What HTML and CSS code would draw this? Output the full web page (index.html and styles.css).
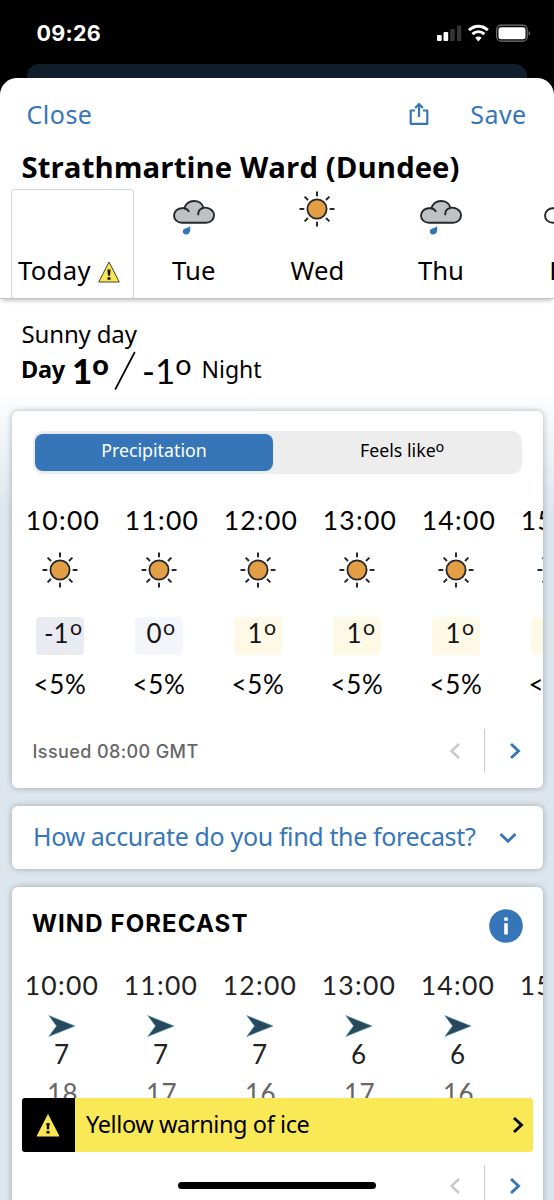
FILE: index.html
```
<!DOCTYPE html>
<html lang="en">
<head>
<meta charset="utf-8">
<title>Weather forecast</title>
<link rel="stylesheet" href="styles.css">
</head>
<body>
<svg class="defs" aria-hidden="true">
  <symbol id="sun" viewBox="0 0 36 36">
    <circle cx="18" cy="18" r="9.6" fill="#e39f45" stroke="#26272a" stroke-width="1.8"/>
    <path d="M18 .5v4.8M18 30.7v4.8M.5 18h4.8M30.7 18h4.8M5.6 5.6l3.4 3.4M27 27l3.400 3.400M5.600 30.400l3.400-3.400M27 9l3.400-3.400" stroke="#26272a" stroke-width="2" fill="none"/>
  </symbol>
  <symbol id="cloud" viewBox="0 0 42 24">
    <path d="M9 22.8C4.3 22.8 1 19.5 1 15.6 1 11.3 4.7 8 9.6 8.3 10.3 7.8 11 8 11.5 8.3 12.3 4 16.2 1 21 1c4.700 0 8.500 2.800 9.400 6.700C36.200 7 41 10.500 41 15.300c0 4.300-3.500 7.500-8 7.500z" fill="currentColor" stroke="#26272a" stroke-width="1.9"/>
    <path d="M11 8.200c2.300.4 4.200 1.700 5 3.800M31 7.900c-3.700.5-6 3.300-5.800 7.300" fill="none" stroke="#26272a" stroke-width="1.900"/>
  </symbol>
  <symbol id="rain" viewBox="0 0 42 36">
    <use href="#cloud" width="42" height="24"/>
    <path d="M17 26.200c.8 3.700.2 8-3.600 8.300-2.700.1-4.200-2.200-3.300-4.300.9-2.200 4.400-1.500 6.900-4z" fill="#3676b8"/>
  </symbol>
  <symbol id="next" viewBox="0 0 12 18"><path d="M2 2l7.500 7L2 16" fill="none" stroke="currentColor" stroke-width="2.900"/></symbol>
  <symbol id="prev" viewBox="0 0 12 18"><path d="M10 2L2.500 9l7.500 7" fill="none" stroke="currentColor" stroke-width="2.400"/></symbol>
  <symbol id="wind" viewBox="0 0 28 22"><path d="M.8.600L27 11 .8 21.400 8.500 11z" fill="#28495c" stroke="#4b94ad" stroke-width=".6"/></symbol>
  <symbol id="bang" viewBox="0 0 22 22">
    <path d="M11 1L21.300 21H.7z" fill="#fae750" stroke="currentColor" stroke-width="1"/>
    <path d="M9.400 8.500h3.200l-.6 6.300h-2zM9.500 16.200h3v2.500h-3z" fill="#111"/>
  </symbol>
</svg>
<div class="phone">
  <div class="status">
    <span class="clock">09:26</span>
    <svg class="status-icons" width="96" height="20" viewBox="0 0 96 20">
      <rect x="1" y="12" width="4.700" height="6" rx="1" fill="#fff"/>
      <rect x="7.500" y="9" width="4.700" height="9" rx="1" fill="#fff"/>
      <rect x="14.200" y="6" width="4.500" height="12" rx="1" fill="#353535"/>
      <rect x="21" y="2.500" width="4.300" height="15.500" rx="1" fill="#353535"/>
      <path d="M33 7.200c5.500-5.300 13.300-5.300 18.800 0M36.400 11.200c3.700-3.400 8.300-3.400 12 0" fill="none" stroke="#fff" stroke-width="3"/>
      <path d="M42.400 18.500l-3.200-3.700c1.800-1.700 4.600-1.700 6.400 0z" fill="#fff"/>
      <rect x="60.700" y="2.200" width="30.500" height="16" rx="4.500" fill="none" stroke="#777" stroke-width="1.200"/>
      <rect x="62.500" y="4.200" width="27" height="12" rx="2.500" fill="#fff"/>
      <path d="M92.700 8v4.600c1.900-.8 1.900-3.800 0-4.600z" fill="#777"/>
    </svg>
  </div>
  <div class="behind"></div>
  <main class="sheet">
    <header class="toolbar">
      <a class="close">Close</a>
      <svg class="share" width="20" height="24" viewBox="0 0 20 24"><path d="M6 8.500H1.700v13.300h16.600V8.500H14M10 15V2.500M6.200 6L10 2l3.800 4" fill="none" stroke="#3676b8" stroke-width="2.200" stroke-linejoin="round"/></svg>
      <a class="save">Save</a>
    </header>
    <h1>Strathmartine Ward (Dundee)</h1>
    <nav class="tabs">
      <div class="tab active"><span class="today">Today</span><svg class="tab-warn" width="22" height="22"><use href="#bang"/></svg></div>
      <div class="tab"><svg class="wx rain" width="42" height="36"><use href="#rain"/></svg><span class="tue">Tue</span></div>
      <div class="tab"><svg class="wx" width="36" height="36"><use href="#sun"/></svg><span>Wed</span></div>
      <div class="tab"><svg class="wx rain" width="42" height="36"><use href="#rain"/></svg><span>Thu</span></div>
      <div class="tab"><svg class="wx clear" width="42" height="36" viewBox="0 0 42 36"><use href="#cloud" width="42" height="24"/></svg><span>Fri</span></div>
    </nav>
    <section class="body">
      <p class="desc">Sunny day</p>
      <p class="range"><b class="day">Day</b><b class="hi">1<i>o</i></b><svg width="22" height="40" viewBox="0 0 22 40"><path d="M1.200 38.500L20.800 1" stroke="#000" stroke-width="1.700"/></svg><span class="lo">-1<i>o</i></span><span class="night">Night</span></p>

      <section class="card hourly">
        <div class="toggle"><span class="on">Precipitation</span><span class="off">Feels like<i>o</i></span></div>
        <div class="cols">
          <div class="col"><time>10:00</time><svg width="36" height="36"><use href="#sun"/></svg><span class="chip cold"><span>-1<i>o</i></span></span><span class="pct">&lt;5%</span></div>
          <div class="col"><time>11:00</time><svg width="36" height="36"><use href="#sun"/></svg><span class="chip cool"><span>0<i>o</i></span></span><span class="pct">&lt;5%</span></div>
          <div class="col"><time>12:00</time><svg width="36" height="36"><use href="#sun"/></svg><span class="chip"><span>1<i>o</i></span></span><span class="pct">&lt;5%</span></div>
          <div class="col"><time>13:00</time><svg width="36" height="36"><use href="#sun"/></svg><span class="chip"><span>1<i>o</i></span></span><span class="pct">&lt;5%</span></div>
          <div class="col"><time>14:00</time><svg width="36" height="36"><use href="#sun"/></svg><span class="chip"><span>1<i>o</i></span></span><span class="pct">&lt;5%</span></div>
          <div class="col"><time>15:00</time><svg width="36" height="36"><use href="#sun"/></svg><span class="chip"></span><span class="pct">&lt;5%</span></div>
        </div>
        <div class="foot">
          <span class="issued">Issued 08:00 GMT</span>
          <svg class="prev" width="12" height="18"><use href="#prev"/></svg>
          <span class="rule"></span>
          <svg class="next" width="12" height="18"><use href="#next"/></svg>
        </div>
      </section>

      <section class="card ask">
        <span>How accurate do you find the forecast?</span>
        <svg width="18" height="12" viewBox="0 0 18 12"><path d="M1.500 2L9 9.300 16.500 2" fill="none" stroke="#3676b8" stroke-width="2.800"/></svg>
      </section>

      <section class="card wind">
        <div class="wind-head">
          <h2>WIND FORECAST</h2>
          <svg width="34" height="34" viewBox="0 0 34 34"><circle cx="17" cy="17" r="16.800" fill="#3676b8"/><path d="M15.200 8.500h3.600v3.200h-3.600zM15.200 14.300h3.600v11.200h-3.600z" fill="#fff"/></svg>
        </div>
        <div class="cols">
          <div class="col"><time>10:00</time><svg width="28" height="22"><use href="#wind"/></svg><span class="speed">7</span><span class="gust">18</span></div>
          <div class="col"><time>11:00</time><svg width="28" height="22"><use href="#wind"/></svg><span class="speed">7</span><span class="gust">17</span></div>
          <div class="col"><time>12:00</time><svg width="28" height="22"><use href="#wind"/></svg><span class="speed">7</span><span class="gust">16</span></div>
          <div class="col"><time>13:00</time><svg width="28" height="22"><use href="#wind"/></svg><span class="speed">6</span><span class="gust">17</span></div>
          <div class="col"><time>14:00</time><svg width="28" height="22"><use href="#wind"/></svg><span class="speed">6</span><span class="gust">16</span></div>
          <div class="col"><time>15:00</time></div>
        </div>
        <div class="foot">
          <svg class="prev" width="12" height="18"><use href="#prev"/></svg>
          <span class="rule"></span>
          <svg class="next" width="12" height="18"><use href="#next"/></svg>
        </div>
      </section>
    </section>
  </main>
  <div class="warning">
    <span class="warning-icon"><svg width="24" height="23" viewBox="0 0 22 22"><use href="#bang"/></svg></span>
    <span class="warning-text">Yellow warning of ice</span>
    <svg width="12" height="18"><use href="#next"/></svg>
  </div>
  <div class="home"></div>
</div>
</body>
</html>
```
FILE: styles.css
```
* { box-sizing: border-box; }
body, h1, h2, p { margin: 0; }
body { font-family: "Noto Sans", "Open Sans", sans-serif; color: #000; background: #000; }
svg { display: block; flex: none; }
span, time, a, b { white-space: nowrap; }
.defs { position: absolute; width: 0; height: 0; }

.phone { position: relative; width: 554px; height: 1200px; overflow: hidden; background: #000; }
.status { height: 64px; padding: 0 22px 0 36.500px; display: flex; justify-content: space-between; align-items: flex-start; }
.clock { font: 700 21.500px/30px "Inter", sans-serif; color: #fff; margin-top: 18px; letter-spacing: .25px; }
.status-icons { margin-top: 23px; }
.behind { height: 14px; margin: 0 27px; background: #101e2b; border-radius: 12px 12px 0 0; }
.sheet { height: 1122px; background: #fff; border-radius: 17px 17px 0 0; overflow: hidden; }

.toolbar { height: 72px; display: flex; align-items: center; padding: 0 27.500px 0 26.500px; color: #3676b8; font-size: 25px; }
.close { letter-spacing: .5px; flex: 1; }
.save { letter-spacing: .4px; }
.share { margin: 0 41px 0 0; }
h1 { height: 36px; padding-left: 21.500px; font: 700 29.300px/34px "Open Sans", sans-serif; letter-spacing: .07px; white-space: nowrap; }

.tabs { position: relative; z-index: 1; height: 113px; display: flex; padding: 3px 0 0 11px; border-bottom: 1px solid #c4c4c4; box-shadow: 0 4px 4px -2px rgba(0,0,0,.22); }
.tab { flex: none; width: 123.600px; height: 109px; display: flex; flex-direction: column; align-items: center; font-size: 25.700px; line-height: 36px; }
.tab span { margin-top: auto; margin-bottom: 9px; }
.tab.active { width: 123px; margin-right: -2px; border: 1px solid #d6d6d6; border-bottom: 0; border-radius: 4px 4px 0 0; flex-direction: row; align-items: flex-end; padding-left: 6px; letter-spacing: .3px; }
.tab-warn { margin: 0 0 15px 7px; color: #444; }
.wx { margin-top: 2px; }
.wx.rain, .wx.clear { margin-top: 11px; color: #bfc2c4; }
.wx.clear { color: #fff; }

.body { padding: 17px 11px 0 11.500px; background: linear-gradient(#fff 90px, #dee6ed 210px); height: 902px; }
i { font-style: normal; font-family: "Lato", sans-serif; font-size: .82em; line-height: 0; position: relative; top: -.37em; margin-left: .06em; }
.desc { height: 35px; padding-left: 10px; font-size: 24px; line-height: 36px; letter-spacing: -.15px; }
.range { height: 38px; padding-left: 9.500px; display: flex; align-items: center; line-height: 38px; }
.range span, .range b { height: 38px; }
.range svg { margin-top: 2px; }
.day { font-size: 23.500px; width: 51px; letter-spacing: -.3px; margin-top: -2px; }
.hi, .lo { font-family: "Lato", sans-serif; font-size: 35px; font-weight: 400; }
.hi { font-weight: 900; width: 42px; }
.hi i, .lo i { margin-left: 0; font-size: .82em; top: -.32em; }
.lo { margin-left: 5px; width: 60.500px; padding-left: 1px; }
.night { font-size: 23px; margin-top: -2px; }

.card { background: #fff; border-radius: 6px; overflow: hidden; box-shadow: 0 0 6px rgba(55,75,95,.4); }
.hourly { height: 377px; margin-top: 22px; padding-top: 20px; }
.toggle { height: 43px; margin: 0 21px 0 21.500px; padding: 3px 0 3px 2px; background: #ededed; border-radius: 10px; display: flex; font-size: 17.800px; line-height: 33px; text-align: center; }
.on { width: 238px; background: #3676b8; border-radius: 8px; color: #fff; box-shadow: 0 0 2px #cfe1f4; }
.off { flex: 1; padding-left: 9px; }
.off i { margin-left: 0; }

.cols { display: flex; margin-left: -1px; font-family: "Lato", sans-serif; }
.col { flex: none; width: 99px; display: flex; flex-direction: column; align-items: center; }
.hourly .cols { padding-top: 26px; }
time { font-size: 26.500px; line-height: 40px; letter-spacing: 1.300px; margin-left: 6px; }
.hourly .col svg { margin-top: 12px; }
.chip { width: 48px; height: 38px; margin-top: 29px; border-radius: 4px; background: #fef8e7; color: #161616; font-size: 26px; line-height: 32px; text-align: right; padding-right: 6px; }
.chip.cold { background: #eaeaf2; padding-right: 2px; }
.chip.cool { background: #f4f5fa; padding-right: 8px; }
.pct { font-size: 26px; line-height: 34px; margin-top: 12px; letter-spacing: .7px; }

.foot { display: flex; align-items: center; height: 43px; padding: 0 21px; }
.hourly .foot { margin-top: 28px; }
.issued { font: 500 18px/30px "Inter", sans-serif; letter-spacing: .4px; color: #666; margin: 2px auto 0 0; }
.prev { color: #c8c8c8; margin-left: auto; }
.issued + .prev { margin-left: 0; }
.rule { width: 1px; height: 43px; background: #ccc; margin: 0 24px 0 23px; }
.next { color: #3676b8; margin-right: 1px; }

.ask { height: 63px; margin-top: 18px; padding: 0 26px 0 21.500px; display: flex; align-items: center; justify-content: space-between; color: #3676b8; font-size: 25px; letter-spacing: -.36px; }
.ask span { line-height: 34px; margin-bottom: 4px; }

.wind { height: 400px; margin-top: 18px; }
.wind-head { height: 78px; padding: 0 20.500px; display: flex; align-items: center; justify-content: space-between; }
h2 { font: 700 24px/34px "Inter", sans-serif; letter-spacing: 1.100px; margin-bottom: 5px; }
.wind .cols { color: #222; }
.wind time { margin-left: 4px; }
.wind .col svg { margin: 9.500px 0 0 3px; }
.speed { font-size: 26px; line-height: 34px; margin-left: 3px; }
.gust { font-size: 26px; line-height: 34px; margin: 5px 0 0 5px; color: #666; letter-spacing: .5px; }
.wind .foot { margin-top: 55px; }

.warning { position: absolute; left: 21.500px; top: 1098px; width: 511px; height: 54px; display: flex; align-items: center; background: #fae957; border-radius: 3px; overflow: hidden; padding-right: 9px; }
.warning-icon { width: 53.500px; height: 54px; background: #000; color: #fae957; display: flex; align-items: center; justify-content: center; }
.warning-text { flex: 1; padding-left: 11px; font-size: 23.500px; line-height: 34px; letter-spacing: -.4px; margin-bottom: 3px; }
.home { position: absolute; left: 178px; top: 1182px; width: 198px; height: 7px; border-radius: 4px; background: #000; }
```
